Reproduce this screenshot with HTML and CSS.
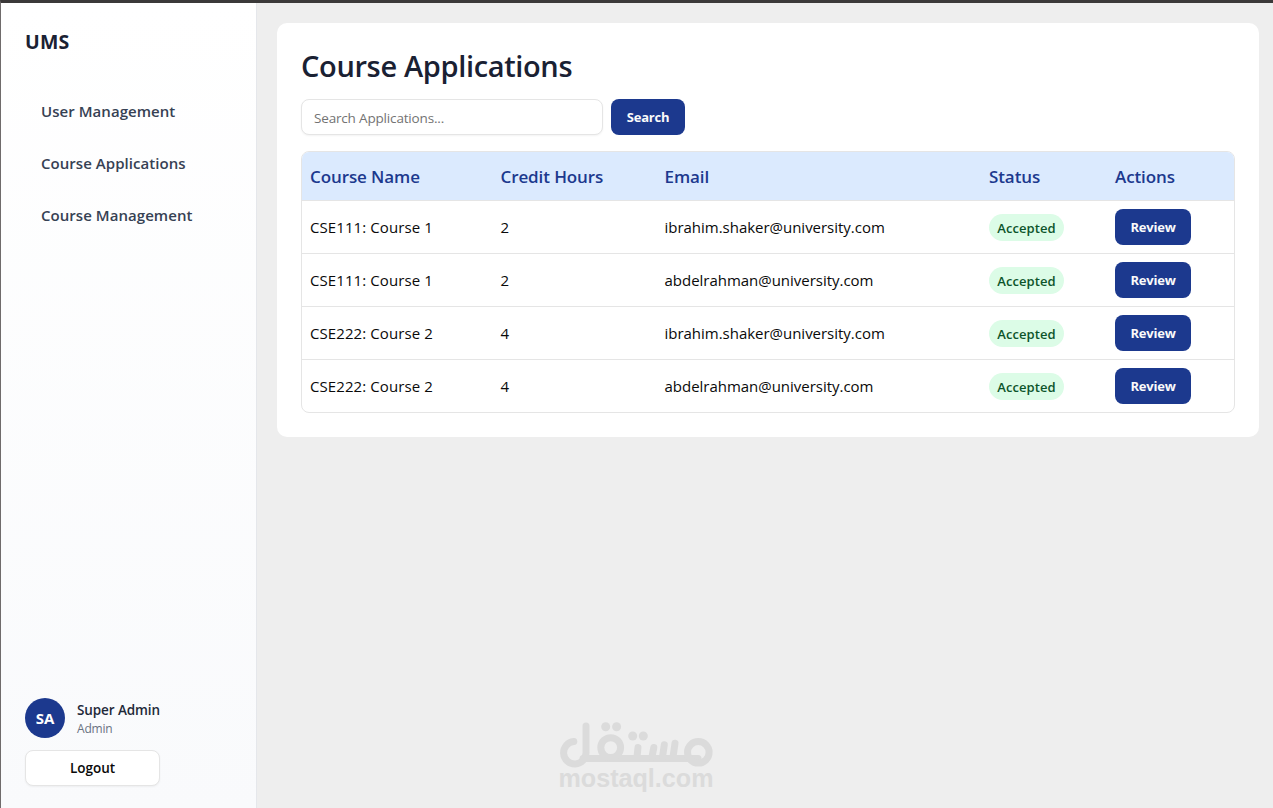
FILE: index.html
```html
<!DOCTYPE html>
<html lang="en">
<head>
<meta charset="utf-8">
<title>Course Applications - UMS</title>
<link rel="stylesheet" href="styles.css">
</head>
<body>
<div class="app">
  <aside class="sidebar">
    <div class="brand">UMS</div>
    <nav class="nav">
      <a class="nav-item">User Management</a>
      <a class="nav-item">Course Applications</a>
      <a class="nav-item">Course Management</a>
    </nav>
    <div class="account">
      <div class="profile">
        <div class="avatar">SA</div>
        <div class="profile-text">
          <div class="profile-name">Super Admin</div>
          <div class="profile-role">Admin</div>
        </div>
      </div>
      <button class="logout">Logout</button>
    </div>
  </aside>
  <main class="main">
    <section class="card">
      <h1 class="title">Course Applications</h1>
      <form class="search">
        <input class="search-input" type="text" placeholder="Search Applications...">
        <button class="btn search-btn" type="button">Search</button>
      </form>
      <div class="table">
        <div class="row head"><span>Course Name</span><span>Credit Hours</span><span>Email</span><span>Status</span><span>Actions</span></div>
        <div class="row"><span class="course">CSE111: Course 1</span><span>2</span><span class="email">ibrahim.shaker@university.com</span><span><span class="badge">Accepted</span></span><span><button class="btn review">Review</button></span></div>
        <div class="row"><span class="course">CSE111: Course 1</span><span>2</span><span class="email">abdelrahman@university.com</span><span><span class="badge">Accepted</span></span><span><button class="btn review">Review</button></span></div>
        <div class="row"><span class="course">CSE222: Course 2</span><span>4</span><span class="email">ibrahim.shaker@university.com</span><span><span class="badge">Accepted</span></span><span><button class="btn review">Review</button></span></div>
        <div class="row"><span class="course">CSE222: Course 2</span><span>4</span><span class="email">abdelrahman@university.com</span><span><span class="badge">Accepted</span></span><span><button class="btn review">Review</button></span></div>
      </div>
    </section>
  </main>
</div>
<svg class="watermark" width="160" height="76" viewBox="556 718 160 76">
  <g fill="none" stroke="#dbdbdb" stroke-width="7" stroke-linecap="round">
    <path d="M573.8 741.6A11.2 11.2 0 1 0 586 752.5V726"/>
    <path d="M583 758.6H698"/>
    <circle cx="610.7" cy="747.6" r="9.9"/>
    <path d="M638 747.5L637 757M653.8 747.5L652 757M664.3 744.8L662.5 757M675 743.3L673 757"/>
    <circle cx="698.3" cy="752.3" r="10.8"/>
  </g>
  <g fill="#dbdbdb">
    <circle cx="605.7" cy="726.8" r="4.5"/><circle cx="616.6" cy="726.8" r="4.5"/>
    <circle cx="632.7" cy="736" r="4.5"/><circle cx="643.3" cy="736" r="4.5"/>
    <text class="watermark-text" x="558.5" y="786.5" textLength="155" lengthAdjust="spacingAndGlyphs">mostaql.com</text>
  </g>
</svg>
</body>
</html>
```
FILE: styles.css
```css
* { box-sizing: border-box; }
body {
  margin: 0;
  background: #eeeeee;
  font-family: "Open Sans", "Noto Sans", sans-serif;
  font-size: 15px;
  color: #0a0a0a;
}
.app {
  display: flex;
  height: 808px;
  border-top: 3px solid #3b3939;
  border-left: 1px solid #6f6b6b;
  overflow: hidden;
}
.sidebar {
  width: 256px;
  flex: none;
  display: flex;
  flex-direction: column;
  padding: 24px 24px 22px;
  background: linear-gradient(#ffffff, #f9fafc);
  border-right: 1px solid #e5e7eb;
}
.brand { font-size: 19.5px; font-weight: 700; line-height: 30px; letter-spacing: .2px; color: #1a2133; }
.nav { display: flex; flex-direction: column; gap: 8px; padding-top: 33px; }
.nav-item {
  height: 44px;
  line-height: 43px;
  padding-left: 16px;
  font-size: 15px;
  font-weight: 600;
  letter-spacing: .05px;
  color: #364153;
  white-space: nowrap;
}
.account { margin-top: auto; width: 135px; }
.profile { display: flex; align-items: center; gap: 12px; height: 40px; margin-bottom: 12px; white-space: nowrap; }
.avatar {
  width: 40px;
  height: 40px;
  flex: none;
  border-radius: 50%;
  background: #1c398e;
  color: #fff;
  font-size: 15px;
  font-weight: 700;
  line-height: 41px;
  text-align: center;
}
.profile-text { padding-top: 2px; }
.profile-name { font-size: 13.5px; font-weight: 600; line-height: 20px; letter-spacing: -.1px; color: #1e2939; }
.profile-role { font-size: 12px; line-height: 18px; color: #6a7282; letter-spacing: -.2px; }
button { font-family: inherit; cursor: pointer; }
.logout {
  display: block;
  width: 135px;
  height: 36px;
  padding: 0;
  border: 1px solid #e5e5e5;
  border-radius: 8px;
  background: #fff;
  box-shadow: 0 1px 2px rgba(0, 0, 0, .05);
  font-size: 13.5px;
  font-weight: 600;
  color: #0a0a0a;
}
.main { flex: 1; padding: 20px 14px 0 20px; }
.card { height: 414px; padding: 23px 24px 24px; border-radius: 10px; background: #fff; }
.title { margin: 0 0 13px; font-size: 29px; font-weight: 600; line-height: 40px; letter-spacing: -.35px; color: #1a2133; white-space: nowrap; }
.search { display: flex; gap: 8px; margin-bottom: 16px; }
.search-input {
  width: 302px;
  height: 36px;
  padding: 3px 12px 1px;
  border: 1px solid #e5e5e5;
  border-radius: 8px;
  box-shadow: 0 1px 2px rgba(0, 0, 0, .05);
  font: 13.5px "Open Sans", sans-serif;
  letter-spacing: -.17px;
}
.search-input::placeholder { color: #737373; }
.btn {
  display: block;
  height: 36px;
  padding: 0;
  border: 0;
  border-radius: 8px;
  background: #1c398e;
  color: #fafafa;
  font-size: 13px;
  font-weight: 700;
  letter-spacing: -.2px;
}
.search-btn { width: 74px; }
.review { width: 76px; }
.table { border: 1px solid #e5e5e5; border-radius: 8px; overflow: hidden; }
.row {
  display: grid;
  grid-template-columns: 190.5px 164px 324.5px 126px 1fr;
  align-items: center;
  height: 53px;
  padding-left: 8px;
  border-bottom: 1px solid #e5e5e5;
  white-space: nowrap;
}
.row:last-child { height: 52px; border-bottom: 0; }
.course { letter-spacing: .09px; }
.email { letter-spacing: -.02px; }
.head { height: 49px; background: #dbeafe; color: #1c398e; font-size: 17px; font-weight: 600; letter-spacing: -.1px; }
.badge {
  display: block;
  width: 75px;
  height: 27px;
  margin-top: 1px;
  border-radius: 14px;
  background: #dcfce7;
  color: #0d542b;
  font-size: 13px;
  font-weight: 600;
  line-height: 28px;
  letter-spacing: .1px;
  text-align: center;
}
.watermark { position: absolute; left: 556px; top: 718px; }
.watermark-text { font: 700 25px "Liberation Sans", sans-serif; }
```
